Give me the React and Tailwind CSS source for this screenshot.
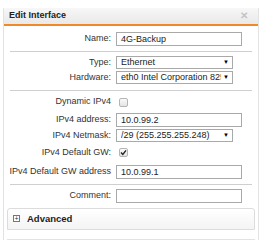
import React from 'react';

function Label({ children }) {
	return <div className="w-[108px] shrink-0 pr-[1px] text-right whitespace-nowrap">{children}</div>;
}

function TextBox({ value }) {
	return (
		<div className="ml-[4px] h-[14px] w-[126px] border border-[#a9a9a9] bg-white pl-[4px] leading-[12px] text-[#222]">
			{value}
		</div>
	);
}

function SelectBox({ value }) {
	return (
		<div className="ml-[4px] flex h-[13px] w-[117px] items-center border border-[#a9a9a9] bg-white pl-[4px] pr-[3px] leading-[11px] text-[#222]">
			<span className="min-w-0 flex-1 overflow-hidden whitespace-nowrap">{value}</span>
			<span className="ml-[2px] shrink-0 text-[6px] text-black">▼</span>
		</div>
	);
}

function CheckBox({ checked }) {
	return (
		<div className="ml-[7px] flex h-[9px] w-[9px] items-center justify-center rounded-[2px] border border-[#b5b5b5] bg-gradient-to-b from-[#fafafa] to-[#e4e4e4]">
			{checked && (
				<svg width="7" height="7" viewBox="0 0 7 7">
					<path d="M1 3.6 L2.8 5.4 L6 1.4" stroke="#222" strokeWidth="1.4" fill="none" />
				</svg>
			)}
		</div>
	);
}

function Separator({ className }) {
	return <div className={`mx-[6px] h-px bg-[#cfcfcf] ${className}`} />;
}

export default function App() {
	return (
		<div className="h-[240px] w-[264px] overflow-hidden bg-white pt-[8px] font-['Liberation_Sans',Arial,sans-serif] text-[9px] text-[#333]">
			<div className="ml-[3px] w-[256px] h-[240px] border-x border-[#e2e2e2] bg-white">
				<header className="flex h-[18px] items-center justify-between rounded-t-[2px] border-b-2 border-[#f0892a] bg-gradient-to-b from-[#f7f7f7] to-[#e9e9e9] pl-[5px] pr-[10px]">
					<span className="text-[9px] font-bold text-[#222]">Edit Interface</span>
					<span className="text-[10px] font-bold leading-none text-[#c4c4c4]">✕</span>
				</header>

				<div className="pt-[6px]">
					<div className="flex items-center">
						<Label>Name:</Label>
						<TextBox value="4G-Backup" />
					</div>
					<Separator className="mt-[5px]" />

					<div className="mt-[4px] flex items-center">
						<Label>Type:</Label>
						<SelectBox value="Ethernet" />
					</div>
					<div className="mt-[1px] flex items-center">
						<Label>Hardware:</Label>
						<SelectBox value="eth0 Intel Corporation 82574L" />
					</div>
					<Separator className="mt-[6px]" />

					<div className="mt-[5px] flex h-[12px] items-center">
						<Label>Dynamic IPv4</Label>
						<CheckBox />
					</div>
					<div className="mt-[5px] flex items-center">
						<Label>IPv4 address:</Label>
						<TextBox value="10.0.99.2" />
					</div>
					<div className="mt-[2px] flex items-center">
						<Label>IPv4 Netmask:</Label>
						<SelectBox value="/29 (255.255.255.248)" />
					</div>
					<div className="mt-[4px] flex h-[12px] items-center">
						<Label>IPv4 Default GW:</Label>
						<CheckBox checked />
					</div>
					<div className="mt-[6px] flex items-center">
						<Label>IPv4 Default GW address</Label>
						<TextBox value="10.0.99.1" />
					</div>
					<Separator className="mt-[5px]" />

					<div className="mt-[4px] flex items-center">
						<Label>Comment:</Label>
						<TextBox value="" />
					</div>

					<div className="mx-[3px] mt-[5px] h-[22px] rounded-t-[3px] border border-[#dcdcdc] bg-gradient-to-b from-white to-[#f4f4f4] pl-[5px] pt-[3px]">
						<div className="flex items-center">
							<span className="flex h-[7px] w-[7px] items-center justify-center border border-[#777] bg-white text-[7px] leading-none text-[#333]">
								+
							</span>
							<span className="ml-[7px] text-[9.5px] font-bold text-[#222]">Advanced</span>
						</div>
					</div>
					<div className="mx-[3px] mt-[9px] h-[2px] bg-[#e2e2e2]" />
				</div>
			</div>
		</div>
	);
}
